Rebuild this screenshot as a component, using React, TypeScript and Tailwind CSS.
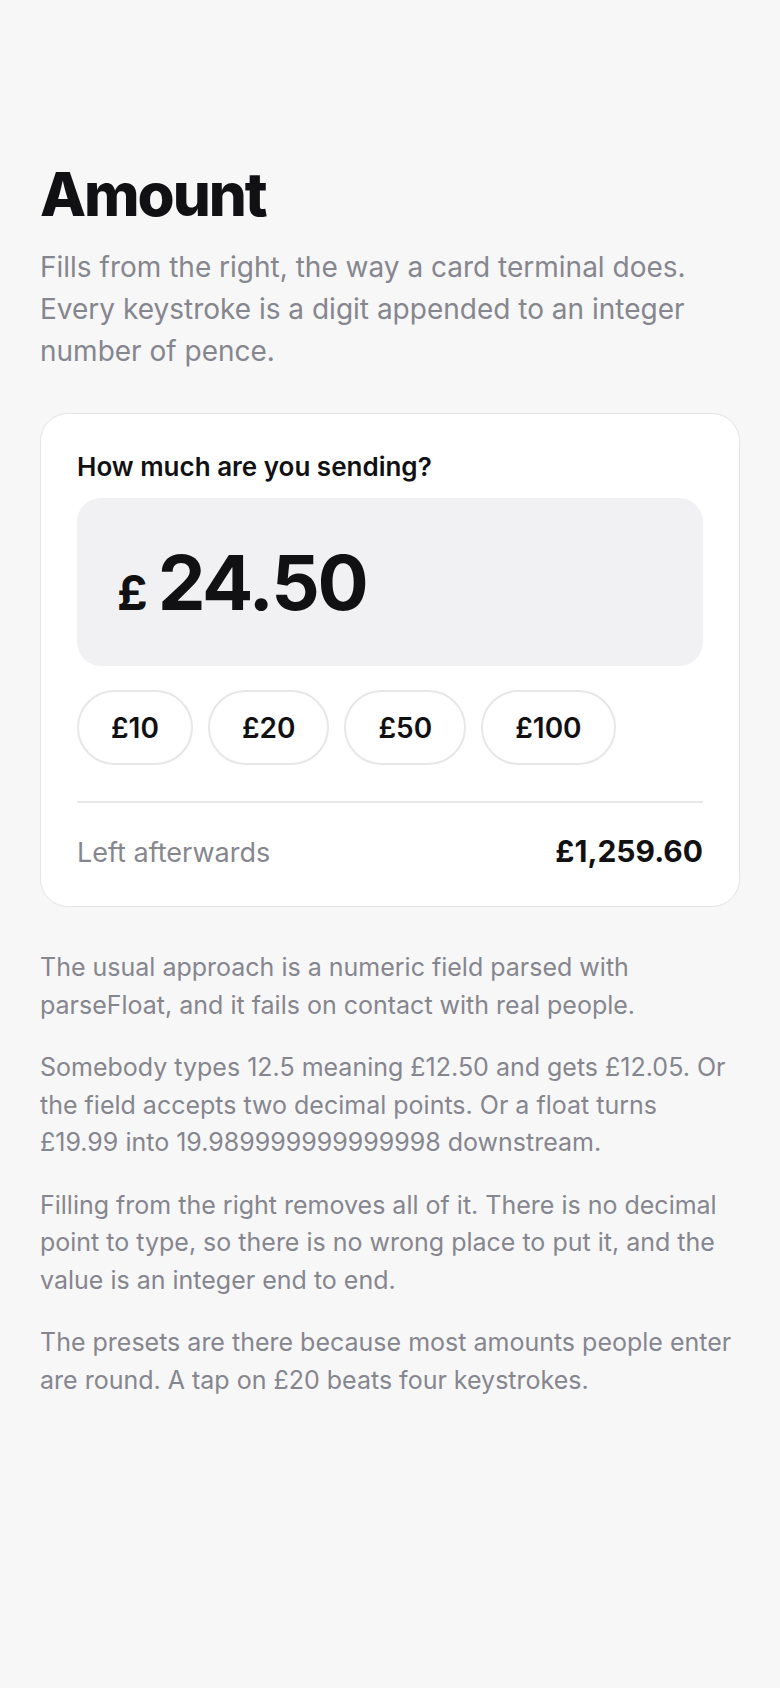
import React from 'react';

const presets = ['£10', '£20', '£50', '£100'];

const notes = [
  'The usual approach is a numeric field parsed with parseFloat, and it fails on contact with real people.',
  'Somebody types 12.5 meaning £12.50 and gets £12.05. Or the field accepts two decimal points. Or a float turns £19.99 into 19.989999999999998 downstream.',
  'Filling from the right removes all of it. There is no decimal point to type, so there is no wrong place to put it, and the value is an integer end to end.',
  'The presets are there because most amounts people enter are round. A tap on £20 beats four keystrokes.',
];

export default function App() {
  return (
    <div className="min-h-screen bg-[#f7f7f8] px-10 pt-[164px] pb-24 font-['Inter',sans-serif] text-[#111114]">
      <h1 className="text-6xl font-extrabold leading-none tracking-[-0.035em]">Amount</h1>
      <p className="mt-[22px] text-[28px] leading-[1.5] text-[#86868f]">
        Fills from the right, the way a card terminal does. Every keystroke is a digit appended to an integer number of pence.
      </p>

      {/* card */}
      <div className="mt-[41px] rounded-[28px] border border-[#e4e4e7] bg-white p-9">
        <p className="text-[26px] font-semibold leading-[33px]">How much are you sending?</p>

        <div className="mt-[15px] flex h-[168px] items-center rounded-3xl bg-[#f1f1f3] px-10">
          <div className="flex items-baseline gap-2.5">
            <span className="text-[48px] font-bold leading-none">£</span>
            <span className="text-[76px] font-bold leading-none tracking-[-0.03em]">24.50</span>
          </div>
        </div>

        <div className="mt-6 flex gap-[15px]">
          {presets.map(p => (
            <button
              key={p}
              className="flex h-[75px] items-center rounded-full border-2 border-[#e7e7ea] bg-white px-8 text-[28px] font-semibold"
            >
              {p}
            </button>
          ))}
        </div>

        <div className="mt-9 flex items-baseline justify-between border-t-2 border-[#e7e7ea] pt-[31px] leading-[34px]">
          <span className="text-[27px] text-[#86868f]">Left afterwards</span>
          <span className="text-[30px] font-bold">£1,259.60</span>
        </div>
      </div>

      <div className="mt-[42px] space-y-[25px]">
        {notes.map((n, i) => (
          <p key={i} className="text-[25px] leading-[1.5] text-[#86868f]">
            {n}
          </p>
        ))}
      </div>
    </div>
  );
}
